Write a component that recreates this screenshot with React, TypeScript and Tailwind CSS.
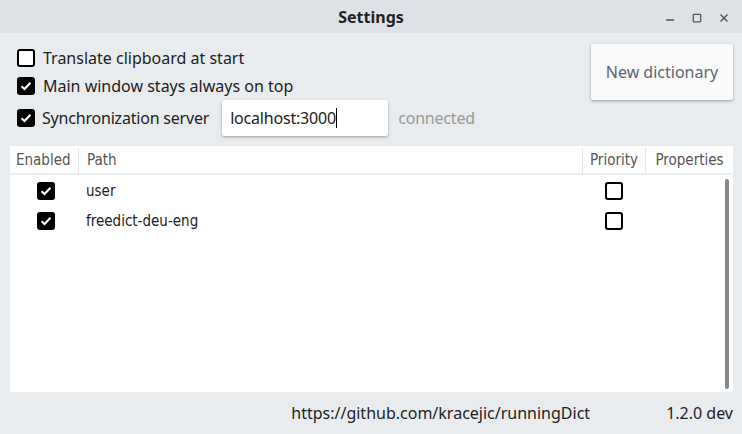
import { Minus, Square, X } from 'lucide-react';

const font = { fontFamily: '"Noto Sans", "Open Sans", sans-serif' };

function Box({ checked }: { checked: boolean }) {
  if (checked) {
    return (
      <div className="w-[18px] h-[18px] bg-black rounded-[3px] flex items-center justify-center flex-shrink-0">
        <svg width="12" height="10" viewBox="0 0 12 10">
          <path d="M1.5 5.2 L4.5 8 L10.5 1.8" stroke="white" strokeWidth="2" fill="none" />
        </svg>
      </div>
    );
  }
  return <div className="w-[18px] h-[18px] border-2 border-black rounded-[3px] bg-white flex-shrink-0" />;
}

const rows = [
  { enabled: true, path: 'user', priority: false },
  { enabled: true, path: 'freedict-deu-eng', priority: false },
];

export default function App() {
  return (
    <div className="w-[742px] h-[434px] bg-[#e9ecef] flex flex-col overflow-hidden" style={font}>
      <div className="h-[33px] bg-[#dee2e6] flex items-center relative flex-shrink-0">
        <div className="flex-1 text-center font-bold text-[16px] text-[#222]">Settings</div>
        <div className="absolute right-[12px] top-[10px] flex items-center gap-[16px] text-[#555]">
          <Minus size={12} strokeWidth={3} className="mt-[4px]" />
          <Square size={10} strokeWidth={3} />
          <X size={12} strokeWidth={3} />
        </div>
      </div>

      <div className="flex px-[17px] pt-[11px] pr-[9px]">
        <div className="flex-1 flex flex-col text-[16px] text-[#222]">
          <div className="flex items-center gap-[8px] h-[28px]">
            <Box checked={false} />
            <span>Translate clipboard at start</span>
          </div>
          <div className="flex items-center gap-[8px] h-[28px]">
            <Box checked />
            <span>Main window stays always on top</span>
          </div>
          <div className="flex items-center gap-[7px] h-[36px] tracking-[-0.2px]">
            <Box checked />
            <span>Synchronization server</span>
            <div className="ml-[6px] w-[166px] h-[36px] bg-white shadow-[0_1px_3px_rgba(0,0,0,0.35)] rounded-[2px] flex items-center px-[8px]">
              <span>localhost:3000</span>
              <span className="w-px h-[20px] bg-black" />
            </div>
            <span className="ml-[3px] text-[#999]">connected</span>
          </div>
        </div>
        <button className="w-[142px] h-[56px] mt-0 bg-[#fafafa] rounded-[2px] shadow-[0_1px_3px_rgba(0,0,0,0.35)] text-[16px] text-[#5c6670]">
          New dictionary
        </button>
      </div>

      <div className="mx-[10px] mr-[9px] mt-[10px] h-[246px] bg-white flex flex-col relative">
        <div className="flex h-[29px] pt-[2px] border-b-2 border-[#eceff1] text-[#555]" style={{ fontFamily: '"DejaVu Sans Condensed", "Roboto", sans-serif', fontSize: 15 }}>
          <div className="w-[69px] flex items-center px-[6px] border-r border-[#e4e7ea]">Enabled</div>
          <div className="flex-1 flex items-center px-[8px]">Path</div>
          <div className="w-[64px] flex items-center justify-center border-l border-r border-[#e4e7ea]">Priority</div>
          <div className="w-[87px] flex items-center justify-center">Properties</div>
        </div>
        <div className="flex flex-col pt-[1px] text-[15px] text-[#222]" style={{ fontFamily: '"DejaVu Sans Condensed", "Roboto", sans-serif' }}>
          {rows.map((r) => (
            <div key={r.path} className="flex items-center h-[30px]">
              <div className="w-[69px] flex justify-center pl-[3px]">
                <Box checked={r.enabled} />
              </div>
              <div className="flex-1 px-[7px]">{r.path}</div>
              <div className="w-[64px] flex justify-center">
                <Box checked={r.priority} />
              </div>
              <div className="w-[87px]" />
            </div>
          ))}
        </div>
        <div className="absolute right-[4px] top-[33px] bottom-[3px] w-[4px] rounded-full bg-[#888]" />
      </div>

      <div className="flex-1 flex items-center justify-end pr-[9px] text-[16px] text-[#222]">
        <span>https://github.com/kracejic/runningDict</span>
        <span className="ml-[76px]">1.2.0 dev</span>
      </div>
    </div>
  );
}
